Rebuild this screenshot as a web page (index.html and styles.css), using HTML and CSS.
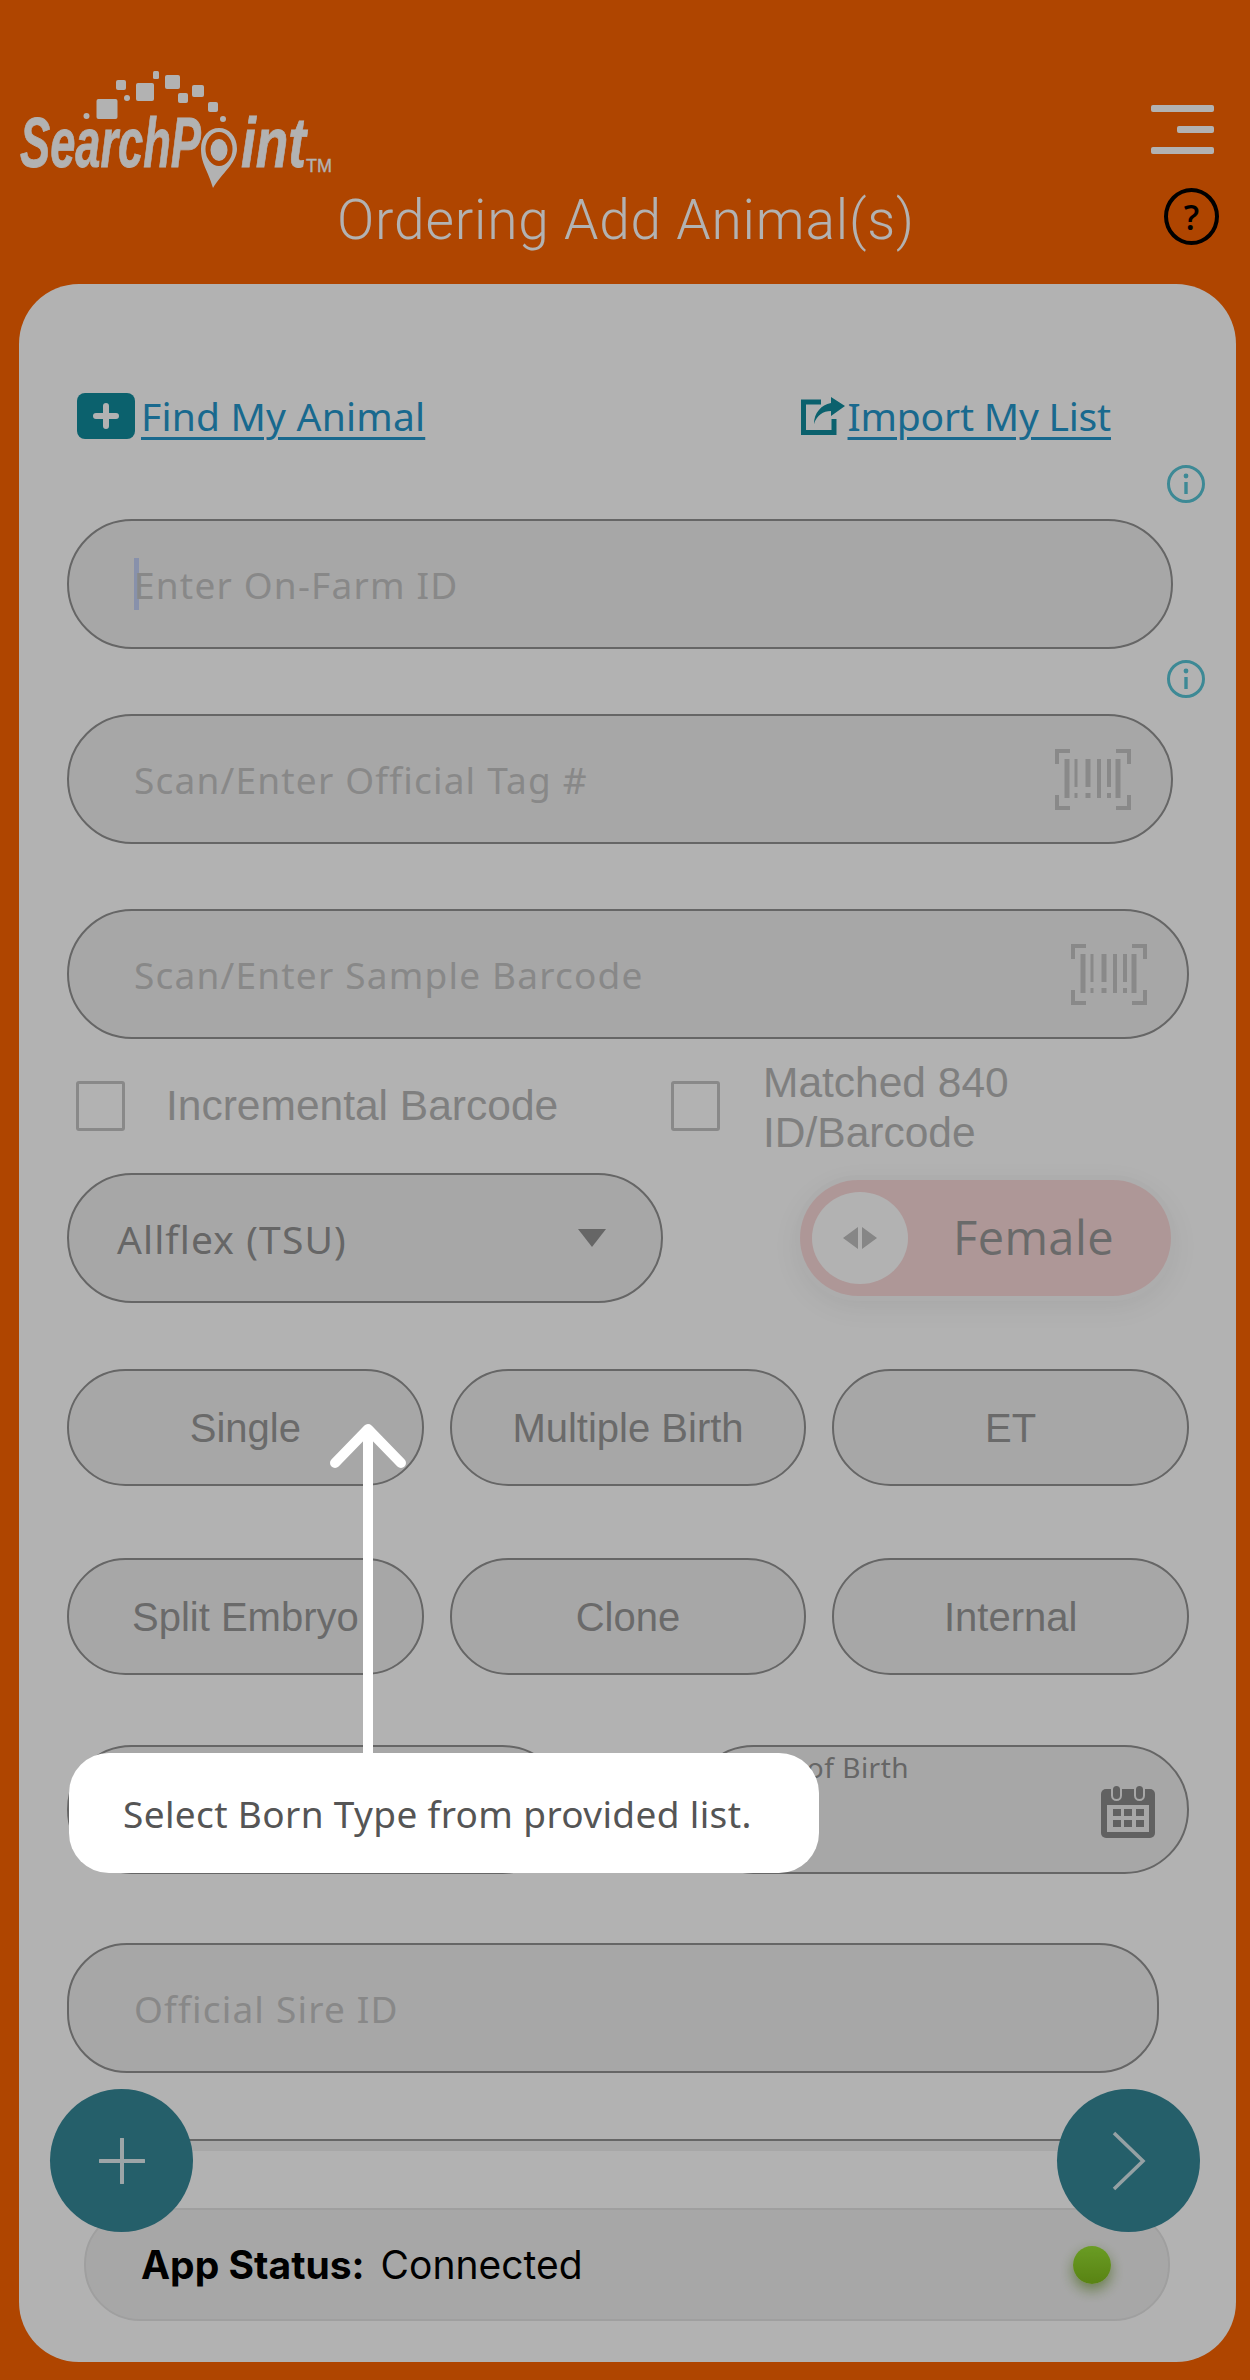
FILE: index.html
```html
<!DOCTYPE html>
<html lang="en">
<head>
    <meta charset="UTF-8">
    <meta name="viewport" content="width=device-width, initial-scale=1.0">
    <title>Ordering Add Animal(s)</title>
    <link rel="stylesheet" href="styles.css">
</head>
<body>
    <div class="page">
        <header class="header">
            <div class="header-top">
                <svg class="logo" viewBox="0 0 320 125" width="320" height="125">
                    <g fill="#fff">
                        <rect x="76.5" y="29" width="21" height="20" rx="2"/>
                        <rect x="116" y="13" width="18" height="18" rx="2"/>
                        <rect x="96" y="10" width="10" height="10" rx="2"/>
                        <rect x="145" y="5" width="15" height="14" rx="2"/>
                        <rect x="133" y="1" width="6" height="8" rx="1.5"/>
                        <rect x="172" y="15" width="12" height="12" rx="2"/>
                        <rect x="158" y="23" width="10" height="10" rx="2"/>
                        <rect x="188" y="32" width="10" height="10" rx="2"/>
                        <circle cx="107" cy="28" r="3"/>
                        <circle cx="66.5" cy="46" r="3"/>
                        <circle cx="203" cy="49" r="3"/>
                    </g>
                    <text class="logo-word" transform="translate(0 97) scale(.646 1)">SearchP</text>
                    <text class="logo-word" transform="translate(221 97) scale(.76 1)">int</text>
                    <text class="logo-tm" x="286" y="102">TM</text>
                    <path d="M193 118 C188 100 181 94 181 79 C181 66 189 58 199 58 C209 58 217 66 217 79 C217 93 201 104 193 118 Z" fill="#fff"/>
                    <ellipse cx="199" cy="79" rx="13.5" ry="17" fill="#fb6300"/>
                    <ellipse cx="199" cy="80" rx="8.5" ry="11" fill="#fff"/>
                </svg>
                <div class="menu-icon">
                    <span class="menu-bar"></span>
                    <span class="menu-bar menu-bar-short"></span>
                    <span class="menu-bar"></span>
                </div>
            </div>
            <div class="header-title">
                <h1>Ordering Add Animal(s)</h1>
                <span class="help-icon">?</span>
            </div>
        </header>

        <main class="card">
            <div class="form-scroll">
                <div class="links">
                    <a class="link" href="#">
                        <svg viewBox="0 0 58 46" width="58" height="46">
                            <rect width="58" height="46" rx="8" fill="#108c9d"/>
                            <path d="M29 13v20M19 23h20" stroke="#fff" stroke-width="6" stroke-linecap="round"/>
                        </svg>
                        <span class="link-text">Find My Animal</span>
                    </a>
                    <a class="link link-import" href="#">
                        <svg viewBox="0 0 44 38" width="44" height="38">
                            <path d="M20 5H2.5v30.5H33V22" fill="none" stroke="#108c9d" stroke-width="5"/>
                            <path d="M30 0l14 9-14 10v-5c-8 0-14 4-17 13 0-11 7-19 17-21z" fill="#108c9d"/>
                        </svg>
                        <span class="link-text">Import My List</span>
                    </a>
                </div>

                <div class="info-row">
                    <svg class="info-icon" viewBox="0 0 40 40" width="40" height="40">
                        <circle cx="20" cy="20" r="17.5" fill="none" stroke="#58c5d6" stroke-width="3"/>
                        <circle cx="20" cy="12" r="2.4" fill="#58c5d6"/>
                        <path d="M20 18v12" stroke="#58c5d6" stroke-width="3.4"/>
                    </svg>
                </div>
                <div class="field field-first">
                    <span class="caret"></span><span class="placeholder">Enter On-Farm ID</span>
                </div>

                <div class="info-row info-row-2">
                    <svg class="info-icon" viewBox="0 0 40 40" width="40" height="40">
                        <circle cx="20" cy="20" r="17.5" fill="none" stroke="#58c5d6" stroke-width="3"/>
                        <circle cx="20" cy="12" r="2.4" fill="#58c5d6"/>
                        <path d="M20 18v12" stroke="#58c5d6" stroke-width="3.4"/>
                    </svg>
                </div>
                <div class="field field-first">
                    <span class="placeholder">Scan/Enter Official Tag #</span>
                    <svg class="barcode" viewBox="0 0 76 61" width="76" height="61">
                        <path d="M15 2H2v13M61 2h13v13M2 46v13h13M74 46v13H61" fill="none" stroke="#c4c4c4" stroke-width="4"/>
                        <path d="M12 10v39M63 10v39" stroke="#c4c4c4" stroke-width="5"/>
                        <path d="M44 10v39" stroke="#c4c4c4" stroke-width="4"/>
                        <path d="M21 10v28M21 44v5" stroke="#c4c4c4" stroke-width="3"/>
                        <path d="M33 10v28M33 44v5" stroke="#c4c4c4" stroke-width="5"/>
                        <path d="M54 10v28M54 44v5" stroke="#c4c4c4" stroke-width="4"/>
                    </svg>
                </div>

                <div class="field field-wide">
                    <span class="placeholder">Scan/Enter Sample Barcode</span>
                    <svg class="barcode" viewBox="0 0 76 61" width="76" height="61">
                        <path d="M15 2H2v13M61 2h13v13M2 46v13h13M74 46v13H61" fill="none" stroke="#c4c4c4" stroke-width="4"/>
                        <path d="M12 10v39M63 10v39" stroke="#c4c4c4" stroke-width="5"/>
                        <path d="M44 10v39" stroke="#c4c4c4" stroke-width="4"/>
                        <path d="M21 10v28M21 44v5" stroke="#c4c4c4" stroke-width="3"/>
                        <path d="M33 10v28M33 44v5" stroke="#c4c4c4" stroke-width="5"/>
                        <path d="M54 10v28M54 44v5" stroke="#c4c4c4" stroke-width="4"/>
                    </svg>
                </div>

                <div class="check-row">
                    <label class="check check-left">
                        <span class="check-box"></span>
                        <span>Incremental Barcode</span>
                    </label>
                    <label class="check check-right">
                        <span class="check-box"></span>
                        <span class="check-two-lines">Matched 840<br>ID/Barcode</span>
                    </label>
                </div>

                <div class="select-row">
                    <div class="select">
                        <span>Allflex (TSU)</span>
                        <span class="select-arrow"></span>
                    </div>
                    <div class="toggle">
                        <span class="toggle-knob">
                            <svg viewBox="0 0 34 22" width="34" height="22">
                                <path d="M15 0v22L0 11zM19 0v22l15-11z" fill="#c0c0c0"/>
                            </svg>
                        </span>
                        <span class="toggle-label">Female</span>
                    </div>
                </div>

                <div class="born-grid">
                    <button class="born-btn">Single</button>
                    <button class="born-btn">Multiple Birth</button>
                    <button class="born-btn">ET</button>
                    <button class="born-btn">Split Embryo</button>
                    <button class="born-btn">Clone</button>
                    <button class="born-btn">Internal</button>
                </div>

                <div class="date-row">
                    <div class="field-half"></div>
                    <div class="field-half field-date">
                        <span class="date-label">Date of Birth</span>
                        <svg class="calendar" viewBox="0 0 54 54" width="54" height="54">
                            <path d="M5 5h44a5 5 0 0 1 5 5v39a5 5 0 0 1-5 5H5a5 5 0 0 1-5-5V10a5 5 0 0 1 5-5z" fill="#8b8b8b"/>
                            <rect x="6" y="21" width="42" height="27" fill="#f0f0f0"/>
                            <rect x="11" y="1" width="9" height="15" rx="4.5" fill="#8b8b8b" stroke="#f0f0f0" stroke-width="2"/>
                            <rect x="34" y="1" width="9" height="15" rx="4.5" fill="#8b8b8b" stroke="#f0f0f0" stroke-width="2"/>
                            <g fill="#8b8b8b">
                                <rect x="12" y="25" width="8" height="7"/>
                                <rect x="23" y="25" width="8" height="7"/>
                                <rect x="35" y="25" width="8" height="7"/>
                                <rect x="12" y="36" width="8" height="7"/>
                                <rect x="23" y="36" width="8" height="7"/>
                                <rect x="35" y="36" width="8" height="7"/>
                            </g>
                        </svg>
                    </div>
                </div>

                <div class="field field-sire">
                    <span class="placeholder">Official Sire ID</span>
                </div>

                <div class="field field-wide field-clipped"></div>
            </div>

            <div class="status-bar">
                <strong>App Status:</strong>
                <span>Connected</span>
                <span class="status-dot"></span>
            </div>
        </main>

        <button class="fab fab-add">
            <svg viewBox="0 0 46 46" width="46" height="46">
                <path d="M23 1v44M1 23h44" stroke="#fff" stroke-opacity=".85" stroke-width="4" stroke-linecap="round"/>
            </svg>
        </button>
        <button class="fab fab-next">
            <svg viewBox="0 0 34 60" width="34" height="60">
                <path d="M2 2l29 28L2 58" fill="none" stroke="#fff" stroke-opacity=".8" stroke-width="3.5"/>
            </svg>
        </button>

        <div class="overlay"></div>

        <svg class="tip-arrow" viewBox="0 0 76 334" width="76" height="334">
            <path d="M38 8v326" stroke="#fff" stroke-width="10"/>
            <path d="M5 42L38 8l33 34" fill="none" stroke="#fff" stroke-width="10" stroke-linecap="round" stroke-linejoin="round"/>
        </svg>
        <div class="tooltip">Select Born Type from provided list.</div>
    </div>
</body>
</html>
```

FILE: styles.css
```css
* {
    box-sizing: border-box;
}
body {
    margin: 0;
    padding: 0;
    font-family: "Open Sans", sans-serif;
}
.page {
    position: relative;
    width: 1250px;
    height: 2380px;
    overflow: hidden;
    background-color: #fb6300;
}

/* header */
.header {
    height: 284px;
    padding: 70px 36px 0 20px;
    display: flex;
    flex-direction: column;
}
.header-top {
    height: 125px;
    display: flex;
    justify-content: space-between;
}
.logo-word {
    font-family: "Liberation Sans", sans-serif;
    font-weight: bold;
    font-style: italic;
    font-size: 70px;
    fill: #fff;
    stroke: #fff;
    stroke-width: .8px;
}
.logo-tm {
    font-family: "Liberation Sans", sans-serif;
    font-size: 18px;
    fill: #fff;
    stroke: #fff;
    stroke-width: .3px;
}
.menu-icon {
    width: 63px;
    margin-top: 35px;
    display: flex;
    flex-direction: column;
    align-items: flex-end;
    gap: 14px;
}
.menu-bar {
    display: block;
    width: 63px;
    height: 7px;
    border-radius: 2px;
    background-color: #fff;
}
.menu-bar-short {
    width: 37px;
}
.header-title {
    margin-top: -7px;
    display: flex;
    align-items: flex-start;
}
.header-title h1 {
    margin: 0 0 0 317px;
    font-family: Roboto, sans-serif;
    font-weight: 300;
    font-size: 55px;
    letter-spacing: .85px;
    line-height: 64px;
    color: #fff;
}
.help-icon {
    margin-left: auto;
    margin-right: -5px;
    margin-top: 0;
    width: 55px;
    height: 57px;
    border: 4px solid #000;
    border-radius: 50%;
    display: flex;
    align-items: center;
    justify-content: center;
    font-family: "Open Sans", sans-serif;
    font-size: 34px;
    font-weight: 600;
    color: #000;
}

/* card */
.card {
    margin-left: 19px;
    width: 1217px;
    height: 2078px;
    background-color: #fff;
    border-radius: 60px;
    overflow: hidden;
}
.form-scroll {
    height: 1867px;
    padding-left: 48px;
    overflow: hidden;
}
.links {
    width: 1034px;
    margin-left: 10px;
    padding-top: 109px;
    height: 155px;
    display: flex;
    justify-content: space-between;
}
.link {
    display: flex;
    align-items: flex-start;
    gap: 6px;
    color: #2597cc;
    text-decoration: none;
}
.link svg {
    flex-shrink: 0;
}
.link-import {
    gap: 3px;
}
.link-import svg {
    margin-top: 4px;
}
.link-text {
    font-family: "Noto Sans", sans-serif;
    font-size: 39px;
    line-height: 46px;
    letter-spacing: .2px;
    text-decoration: underline;
    text-decoration-thickness: 3px;
    text-underline-offset: 6px;
}
.link-import .link-text {
    letter-spacing: -.2px;
}
.info-row {
    width: 1139px;
    height: 80px;
    padding-top: 25px;
    display: flex;
    justify-content: flex-end;
}
.info-row-2 {
    height: 65px;
    padding-top: 10px;
}
.field {
    height: 130px;
    padding-left: 65px;
    padding-right: 40px;
    display: flex;
    align-items: center;
    justify-content: space-between;
    background-color: #f0f0f0;
    border: 2px solid #929292;
    border-radius: 65px;
}
.field-first {
    width: 1106px;
}
.field-wide {
    width: 1122px;
    margin-top: 65px;
}
.field-first .caret {
    display: inline-block;
    flex: none;
    width: 5px;
    height: 52px;
    margin-right: -5px;
    background-color: #c3d0f5;
}
.field-first:has(.caret) {
    justify-content: flex-start;
}
.placeholder {
    font-family: "Noto Sans", sans-serif;
    font-size: 37px;
    letter-spacing: 1.2px;
    color: #c3c3c3;
}

/* checkboxes */
.check-row {
    height: 100px;
    margin-top: 17px;
    display: flex;
    align-items: center;
    font-family: "Liberation Sans", sans-serif;
    font-size: 42.5px;
    line-height: 50px;
    color: #b7b7b7;
}
.check {
    display: flex;
    align-items: center;
}
.check-left {
    width: 604px;
    padding-left: 9px;
    gap: 41px;
}
.check-right {
    gap: 43px;
}
.check-two-lines {
    padding-top: 3px;
}
.check-box {
    display: block;
    width: 49px;
    height: 50px;
    border: 3px solid #c4c4c4;
    border-radius: 3px;
    background-color: #fff;
}

/* select and toggle */
.select-row {
    height: 130px;
    margin-top: 17px;
    display: flex;
    align-items: center;
}
.select {
    width: 596px;
    height: 130px;
    padding: 0 55px 0 48px;
    display: flex;
    align-items: center;
    justify-content: space-between;
    background-color: #f0f0f0;
    border: 2px solid #929292;
    border-radius: 65px;
    font-family: "Noto Sans", sans-serif;
    font-size: 39px;
    letter-spacing: 1.1px;
    color: #929292;
}
.select-arrow {
    width: 0;
    height: 0;
    border-left: 14px solid transparent;
    border-right: 14px solid transparent;
    border-top: 18px solid #929292;
}
.toggle {
    width: 371px;
    height: 116px;
    margin-left: 137px;
    padding-left: 12px;
    display: flex;
    align-items: center;
    background-color: #fad9d9;
    border-radius: 58px;
    box-shadow: 0 0 0 5px #f8f8f8, 0 8px 30px rgba(0, 0, 0, .08);
}
.toggle-knob {
    width: 96px;
    height: 92px;
    border-radius: 50%;
    background-color: #fff;
    display: flex;
    align-items: center;
    justify-content: center;
}
.toggle-label {
    margin-left: 45px;
    margin-top: -3px;
    font-size: 47px;
    letter-spacing: .4px;
    color: #999;
}

/* born type */
.born-grid {
    width: 1122px;
    margin-top: 66px;
    display: grid;
    grid-template-columns: repeat(3, 1fr);
    grid-auto-rows: 117px;
    row-gap: 72px;
    column-gap: 26px;
}
.born-btn {
    padding: 2px 0 0;
    background-color: #f0f0f0;
    border: 2px solid #929292;
    border-radius: 59px;
    font-family: "Liberation Sans", sans-serif;
    font-size: 40px;
    color: #999;
}
.date-row {
    width: 1122px;
    margin-top: 70px;
    display: flex;
    justify-content: space-between;
}
.field-half {
    width: 500px;
    height: 129px;
    background-color: #f0f0f0;
    border: 2px solid #929292;
    border-radius: 65px;
}
.field-date {
    position: relative;
    padding: 3px 32px 0 44px;
    display: flex;
    justify-content: space-between;
}
.date-label {
    font-family: "Noto Sans", sans-serif;
    font-size: 28px;
    letter-spacing: .5px;
    line-height: 34px;
    color: #929292;
}
.calendar {
    margin-top: 34px;
}
.field-sire {
    width: 1092px;
    margin-top: 69px;
    border-radius: 60px;
}

/* status bar */
.field-clipped {
    margin-top: 66px;
}
.status-bar {
    width: 1086px;
    height: 113px;
    margin: 57px 0 0 65px;
    padding: 0 55px;
    display: flex;
    align-items: center;
    gap: 16px;
    background-color: #f0f0f0;
    border: 2px solid #e4e4e4;
    border-radius: 56px;
    font-family: Inter, sans-serif;
    font-size: 39px;
    color: #000;
}
.status-dot {
    width: 38px;
    height: 38px;
    margin-left: auto;
    margin-right: 2px;
    border-radius: 50%;
    background-image: linear-gradient(#98e034, #80bc1c);
    box-shadow: 0 6px 14px rgba(90, 140, 20, .6);
}

/* floating buttons */
.fab {
    position: absolute;
    top: 2089px;
    width: 143px;
    height: 143px;
    padding: 0;
    border: none;
    border-radius: 50%;
    background-color: #368899;
    display: flex;
    align-items: center;
    justify-content: center;
}
.fab-add {
    left: 50px;
}
.fab-next {
    left: 1057px;
}

/* tutorial layer */
.overlay {
    position: absolute;
    top: 0;
    left: 0;
    width: 100%;
    height: 100%;
    background-color: rgba(0, 0, 0, .3);
}
.tip-arrow {
    position: absolute;
    left: 330px;
    top: 1421px;
}
.tooltip {
    position: absolute;
    left: 69px;
    top: 1753px;
    width: 750px;
    height: 120px;
    padding-left: 54px;
    display: flex;
    align-items: center;
    background-color: #fff;
    border-radius: 40px;
    font-family: "Noto Sans", sans-serif;
    font-size: 37px;
    letter-spacing: .36px;
    color: #555;
}
```
